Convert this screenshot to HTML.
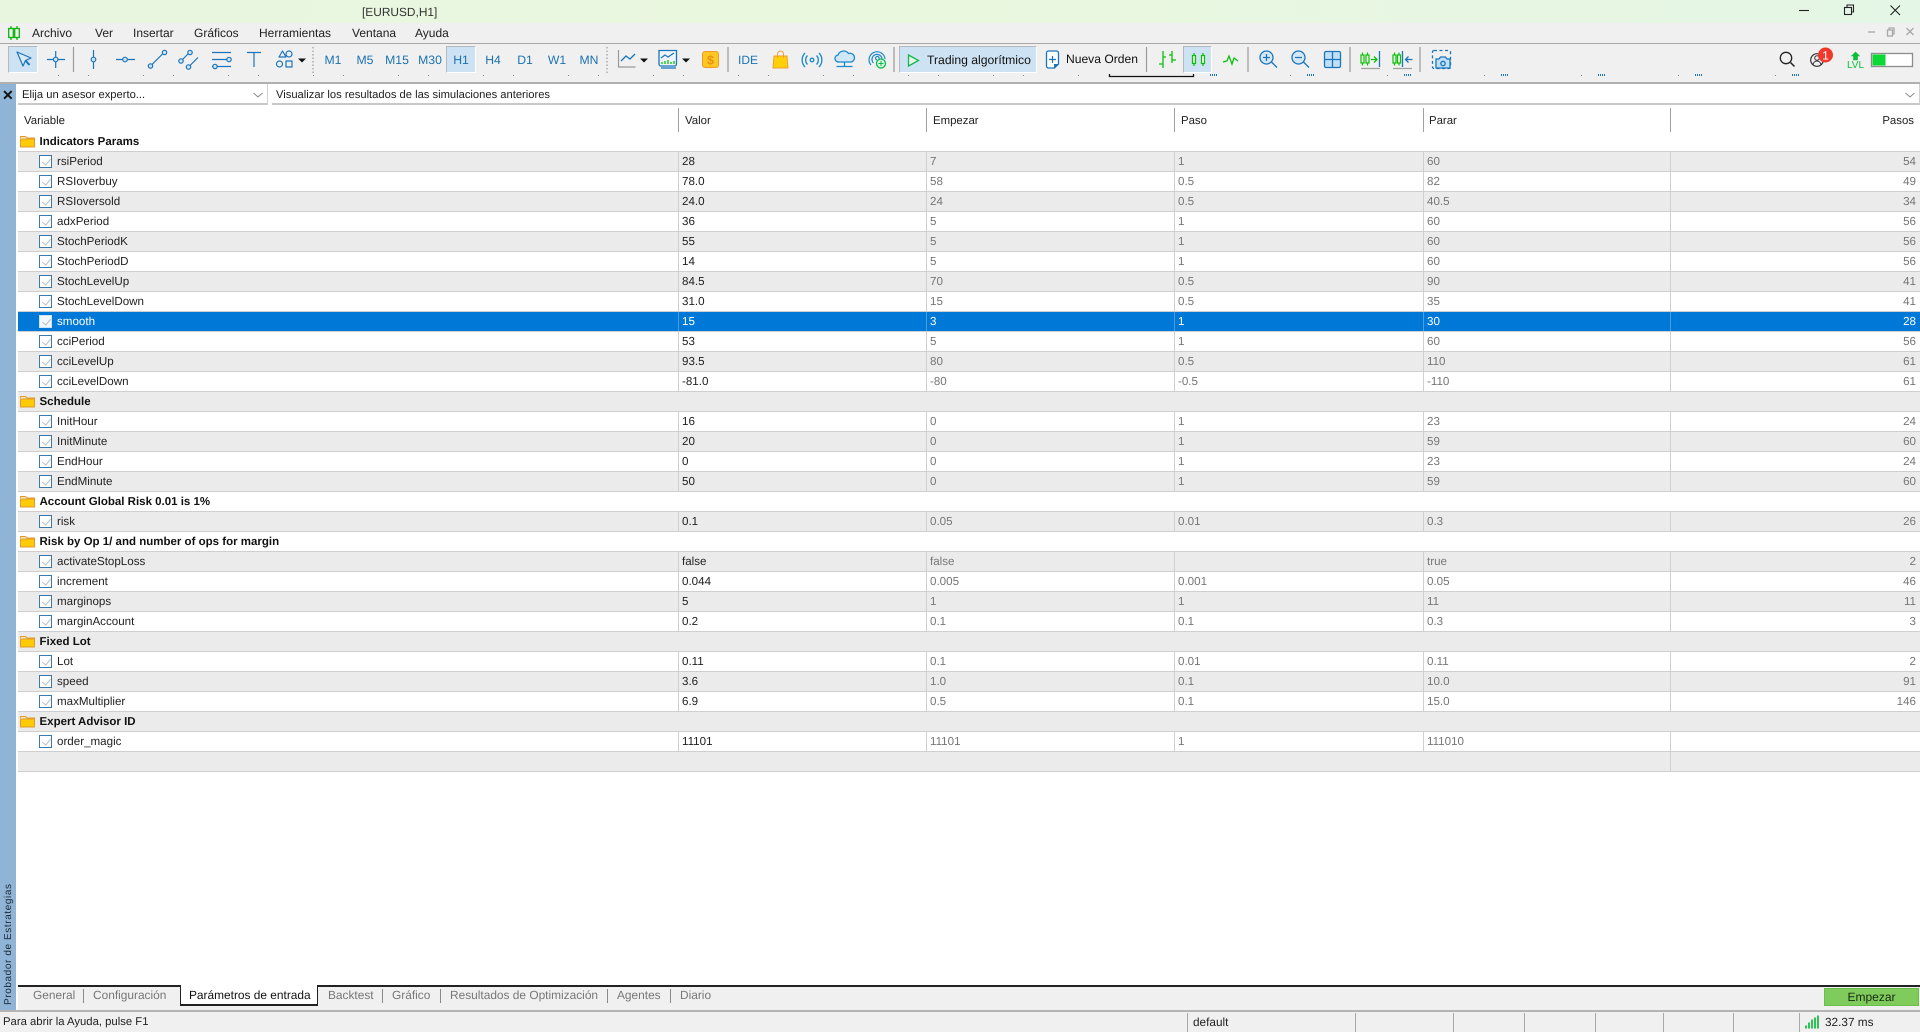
<!DOCTYPE html>
<html lang="es">
<head>
<meta charset="utf-8">
<title>[EURUSD,H1]</title>
<style>
*{box-sizing:border-box;margin:0;padding:0}
html,body{width:1920px;height:1032px;overflow:hidden;background:#fff}
body{position:relative;font-family:"Liberation Sans",sans-serif;font-size:11.6px;color:#1c1c1c;text-rendering:geometricPrecision;filter:blur(.3px)}
.a{position:absolute;white-space:nowrap}
#title{left:0;top:0;width:1920px;height:23px;background:linear-gradient(90deg,#e8f6e0,#eaf7df 50%,#e4f6e5)}
#menu{left:0;top:23px;width:1920px;height:20px;background:#f0f0f0}
#tb{left:0;top:43px;width:1920px;height:41px;background:#f0f0f0;border-top:1px solid #a8a8a8;border-bottom:2px solid #b0b0b0}
.m{font-size:12px;top:26px;color:#222}
.tf{font-size:12.2px;top:53px;color:#1b72b0;width:30px;text-align:center}
.sel{background:#cde2f2;border:1px solid #fff;border-top-color:#b4b9bd;border-left-color:#b4b9bd}
.cmb{background:#fff;border-bottom:2px solid #c8c8c8;border-right:1px solid #d0d0d0;height:21px;top:84px;line-height:22px;padding-left:4px;font-size:11.2px}
#strip{left:0;top:84px;width:16px;height:926px;background:#8fb4d6}
#x{left:2px;top:87px;font-size:14px;font-weight:bold;color:#111;line-height:16px}
#vt{left:1px;top:885px;width:15px;height:120px;writing-mode:vertical-rl;transform:rotate(180deg);font-size:10px;letter-spacing:.6px;line-height:15px;color:#1d2a36;text-align:left}
.h{top:114.500px;font-size:11.4px;color:#222}
.hs{top:108px;width:1px;height:24px;background:#a0a0a0}
.r{position:absolute;left:18px;width:1902px;height:20px;display:grid;grid-template-columns:660px 248px 248px 249px 247px 1fr;line-height:20px;border-bottom:1px solid #cfcfcf;white-space:nowrap}
.r>b{font-weight:normal;border-left:1px solid #cfcfcf;padding-left:3px;color:#777;overflow:hidden}
.r>b:nth-child(2){color:#222}
.r>b:first-child{border-left:0;padding-left:39px;color:#222}
.r>b:last-child{text-align:right;padding-right:4px}
.e{background:#ebebeb}
.g{display:block;font-weight:bold;padding-left:21.5px;color:#111;font-size:11.5px}
.s{background:#0078d7}
.s>b,.s>b:first-child,.s>b:nth-child(2){color:#fff;border-left-color:#4a9fe0}
.cb{position:absolute;left:21px;top:3px;width:13px;height:13px;border:1px solid #3a77ab;background:#fff}
.cb:after{content:"";position:absolute;left:3.5px;top:1px;width:4px;height:7px;border:solid #bcbcbc;border-width:0 1px 1px 0;transform:rotate(40deg)}
.s .cb{border-color:#cfe3f5;background:#f2f7fb}
.f{position:absolute;left:2px;top:2px}
#tabs{left:18px;top:985px;width:1902px;height:25px;background:#f0f0f0;border-top:2px solid #222}
#sb{left:0;top:1010px;width:1920px;height:22px;background:#f0f0f0;border-top:2px solid #b4b4b4}
.t{top:988px;color:#777;font-size:11.9px}
.ts{top:989px;width:1px;height:14px;background:#8a8a8a}
#at{left:180px;top:985px;width:138px;height:21px;background:#fff;border:2px solid #222;border-top:0;border-left-width:1.5px;border-right-width:1.5px}
.st{top:1015px;font-size:11.8px;color:#222}
.ss{top:1013px;width:1px;height:19px;background:#a8a8a8}
#go{left:1824px;top:988px;width:95px;height:18px;background:#7fcb5c;border:1px solid #6dbf4b;text-align:center;line-height:16px;font-size:12px;color:#1c2a12}
#ic{position:absolute;left:0;top:0}
</style>
</head>
<body>
<div class="a" id="title"></div>
<div class="a" id="menu"></div>
<div class="a" id="tb"></div>
<div class="a" style="left:362px;top:5px;font-size:11.9px;color:#333">[EURUSD,H1]</div>

<div class="a m" style="left:32px">Archivo</div>
<div class="a m" style="left:95px">Ver</div>
<div class="a m" style="left:133px">Insertar</div>
<div class="a m" style="left:194px">Gráficos</div>
<div class="a m" style="left:259px">Herramientas</div>
<div class="a m" style="left:352px">Ventana</div>
<div class="a m" style="left:415px">Ayuda</div>

<div class="a sel" style="left:8px;top:46px;width:30px;height:27px"></div>
<div class="a sel" style="left:446px;top:46px;width:30px;height:27px"></div>
<div class="a sel" style="left:899px;top:46px;width:138px;height:27px"></div>
<div class="a sel" style="left:1183px;top:46px;width:29px;height:27px"></div>

<div class="a tf" style="left:318px">M1</div>
<div class="a tf" style="left:350px">M5</div>
<div class="a tf" style="left:382px">M15</div>
<div class="a tf" style="left:415px">M30</div>
<div class="a tf" style="left:446px">H1</div>
<div class="a tf" style="left:478px">H4</div>
<div class="a tf" style="left:510px">D1</div>
<div class="a tf" style="left:542px">W1</div>
<div class="a tf" style="left:574px">MN</div>

<div class="a" style="left:927px;top:53px;font-size:12.2px;color:#111">Trading algorítmico</div>
<div class="a" style="left:1066px;top:52px;font-size:12.1px;color:#111">Nueva Orden</div>

<div class="a" id="strip"></div>
<div class="a" id="x">✕</div>
<div class="a" id="vt">Probador de Estrategias</div>

<div class="a cmb" style="left:18px;width:250px">Elija un asesor experto...</div>
<div class="a cmb" style="left:272px;width:1648px">Visualizar los resultados de las simulaciones anteriores</div>

<div class="a h" style="left:24px">Variable</div>
<div class="a h" style="left:685px">Valor</div>
<div class="a h" style="left:933px">Empezar</div>
<div class="a h" style="left:1181px">Paso</div>
<div class="a h" style="left:1429px">Parar</div>
<div class="a h" style="right:6px">Pasos</div>
<div class="a hs" style="left:678px"></div>
<div class="a hs" style="left:926px"></div>
<div class="a hs" style="left:1174px"></div>
<div class="a hs" style="left:1423px"></div>
<div class="a hs" style="left:1670px"></div>

<div class="r g" style="top:132px"><svg class="f" width="16" height="14"><use href="#fd"/></svg>Indicators Params</div>
<div class="r e" style="top:152px"><b><span class="cb"></span>rsiPeriod</b><b>28</b><b>7</b><b>1</b><b>60</b><b>54</b></div>
<div class="r" style="top:172px"><b><span class="cb"></span>RSIoverbuy</b><b>78.0</b><b>58</b><b>0.5</b><b>82</b><b>49</b></div>
<div class="r e" style="top:192px"><b><span class="cb"></span>RSIoversold</b><b>24.0</b><b>24</b><b>0.5</b><b>40.5</b><b>34</b></div>
<div class="r" style="top:212px"><b><span class="cb"></span>adxPeriod</b><b>36</b><b>5</b><b>1</b><b>60</b><b>56</b></div>
<div class="r e" style="top:232px"><b><span class="cb"></span>StochPeriodK</b><b>55</b><b>5</b><b>1</b><b>60</b><b>56</b></div>
<div class="r" style="top:252px"><b><span class="cb"></span>StochPeriodD</b><b>14</b><b>5</b><b>1</b><b>60</b><b>56</b></div>
<div class="r e" style="top:272px"><b><span class="cb"></span>StochLevelUp</b><b>84.5</b><b>70</b><b>0.5</b><b>90</b><b>41</b></div>
<div class="r" style="top:292px"><b><span class="cb"></span>StochLevelDown</b><b>31.0</b><b>15</b><b>0.5</b><b>35</b><b>41</b></div>
<div class="r s" style="top:312px"><b><span class="cb"></span>smooth</b><b>15</b><b>3</b><b>1</b><b>30</b><b>28</b></div>
<div class="r" style="top:332px"><b><span class="cb"></span>cciPeriod</b><b>53</b><b>5</b><b>1</b><b>60</b><b>56</b></div>
<div class="r e" style="top:352px"><b><span class="cb"></span>cciLevelUp</b><b>93.5</b><b>80</b><b>0.5</b><b>110</b><b>61</b></div>
<div class="r" style="top:372px"><b><span class="cb"></span>cciLevelDown</b><b>-81.0</b><b>-80</b><b>-0.5</b><b>-110</b><b>61</b></div>
<div class="r g e" style="top:392px"><svg class="f" width="16" height="14"><use href="#fd"/></svg>Schedule</div>
<div class="r" style="top:412px"><b><span class="cb"></span>InitHour</b><b>16</b><b>0</b><b>1</b><b>23</b><b>24</b></div>
<div class="r e" style="top:432px"><b><span class="cb"></span>InitMinute</b><b>20</b><b>0</b><b>1</b><b>59</b><b>60</b></div>
<div class="r" style="top:452px"><b><span class="cb"></span>EndHour</b><b>0</b><b>0</b><b>1</b><b>23</b><b>24</b></div>
<div class="r e" style="top:472px"><b><span class="cb"></span>EndMinute</b><b>50</b><b>0</b><b>1</b><b>59</b><b>60</b></div>
<div class="r g" style="top:492px"><svg class="f" width="16" height="14"><use href="#fd"/></svg>Account Global Risk 0.01 is 1%</div>
<div class="r e" style="top:512px"><b><span class="cb"></span>risk</b><b>0.1</b><b>0.05</b><b>0.01</b><b>0.3</b><b>26</b></div>
<div class="r g" style="top:532px"><svg class="f" width="16" height="14"><use href="#fd"/></svg>Risk by Op 1/ and number of ops for margin</div>
<div class="r e" style="top:552px"><b><span class="cb"></span>activateStopLoss</b><b>false</b><b>false</b><b></b><b>true</b><b>2</b></div>
<div class="r" style="top:572px"><b><span class="cb"></span>increment</b><b>0.044</b><b>0.005</b><b>0.001</b><b>0.05</b><b>46</b></div>
<div class="r e" style="top:592px"><b><span class="cb"></span>marginops</b><b>5</b><b>1</b><b>1</b><b>11</b><b>11</b></div>
<div class="r" style="top:612px"><b><span class="cb"></span>marginAccount</b><b>0.2</b><b>0.1</b><b>0.1</b><b>0.3</b><b>3</b></div>
<div class="r g e" style="top:632px"><svg class="f" width="16" height="14"><use href="#fd"/></svg>Fixed Lot</div>
<div class="r" style="top:652px"><b><span class="cb"></span>Lot</b><b>0.11</b><b>0.1</b><b>0.01</b><b>0.11</b><b>2</b></div>
<div class="r e" style="top:672px"><b><span class="cb"></span>speed</b><b>3.6</b><b>1.0</b><b>0.1</b><b>10.0</b><b>91</b></div>
<div class="r" style="top:692px"><b><span class="cb"></span>maxMultiplier</b><b>6.9</b><b>0.5</b><b>0.1</b><b>15.0</b><b>146</b></div>
<div class="r g e" style="top:712px"><svg class="f" width="16" height="14"><use href="#fd"/></svg>Expert Advisor ID</div>
<div class="r" style="top:732px"><b><span class="cb"></span>order_magic</b><b>11101</b><b>11101</b><b>1</b><b>111010</b><b></b></div>
<div class="r e" style="top:752px;grid-template-columns:1652px 1fr"><b></b><b></b></div>

<div class="a" id="tabs"></div>
<div class="a" id="at"></div>
<div class="a t" style="left:33px">General</div>
<div class="a ts" style="left:83px"></div>
<div class="a t" style="left:93px">Configuración</div>
<div class="a t" style="left:189px;color:#111">Parámetros de entrada</div>
<div class="a t" style="left:328px">Backtest</div>
<div class="a ts" style="left:382px"></div>
<div class="a t" style="left:392px">Gráfico</div>
<div class="a ts" style="left:440px"></div>
<div class="a t" style="left:450px">Resultados de Optimización</div>
<div class="a ts" style="left:607px"></div>
<div class="a t" style="left:617px">Agentes</div>
<div class="a ts" style="left:670px"></div>
<div class="a t" style="left:680px">Diario</div>
<div class="a" id="go">Empezar</div>

<div class="a" id="sb"></div>
<div class="a st" style="left:3px;top:1016px;font-size:11.3px">Para abrir la Ayuda, pulse F1</div>
<div class="a ss" style="left:1187px"></div>
<div class="a st" style="left:1193px">default</div>
<div class="a ss" style="left:1355px"></div>
<div class="a ss" style="left:1453px"></div>
<div class="a ss" style="left:1524px"></div>
<div class="a ss" style="left:1595px"></div>
<div class="a ss" style="left:1663px"></div>
<div class="a ss" style="left:1733px"></div>
<div class="a ss" style="left:1799px"></div>
<div class="a st" style="left:1825px">32.37 ms</div>

<svg id="ic" width="1920" height="1032" viewBox="0 0 1920 1032" fill="none">
<defs>
<g id="fd"><path d="M.5 4V2.500h5l1.500 1.500h7.500V5" stroke="#e39a2c" fill="#fbe6b8"/><path d="M.5 5h14v8H.5z" fill="#ffcb05" stroke="#e39a2c"/></g>
<g id="cdl" stroke="#0abf0a" stroke-width="1.400"><path d="M0-8v16"/><rect x="-2.500" y="-5.500" width="5" height="11" fill="#f0f8e8"/></g>
<g id="cds" stroke="#0abf0a" stroke-width="1.200"><path d="M0-6.500v13"/><rect x="-1.500" y="-4" width="3" height="8" fill="#f0f8e8"/></g>
</defs>

<!-- window buttons -->
<g stroke="#222" stroke-width="1.100">
<path d="M1799 10.500h10"/><rect x="1844.500" y="7.500" width="7" height="7"/><path d="M1847 7V5h6.500v7h-2"/><path d="M1890.500 5.500l9.500 9.500M1900 5.500l-9.500 9.500"/>
</g>
<g stroke="#a8a8a8" stroke-width="1.300"><path d="M1868 32h7"/><rect x="1887.500" y="30" width="5" height="6"/><path d="M1889 30v-2h5v6h-1.500"/><path d="M1906.500 28l7 7M1913.500 28l-7 7"/></g>

<!-- logo -->
<g stroke="#0bb50b" stroke-width="1.300"><path d="M11 26v14M17 26v14"/><rect x="8.700" y="28.500" width="4.600" height="9" fill="#f0f0f0"/><rect x="14.700" y="28.500" width="4.600" height="9" fill="#f0f0f0"/></g>

<!-- drawing tools -->
<g stroke="#1b75bb" stroke-width="1.200" stroke-linejoin="round">
<path d="M17 52l14 6-5.500 2.500L23 66z" fill="#dbe9f4"/><path d="M25.500 60.500l4 4.500" stroke-width="2"/>
<path d="M47 59.500h18M55.700 51v17"/><circle cx="55.700" cy="59.500" r="2.300" fill="#cfe3f2"/>
<path d="M93.500 50v19"/><circle cx="93.500" cy="59.500" r="2.300" fill="#cfe3f2"/>
<path d="M116 59.500h19"/><circle cx="125" cy="59.500" r="2.300" fill="#cfe3f2"/>
<path d="M152 64.500l11-11"/><circle cx="150.500" cy="66" r="2.200" fill="#cfe3f2"/><circle cx="164.500" cy="52.500" r="2.200" fill="#cfe3f2"/>
<path d="M182.500 59.500l6-6M190 65.500l8-8"/><circle cx="181" cy="61" r="2.200" fill="#cfe3f2"/><circle cx="190" cy="52.500" r="2.200" fill="#cfe3f2"/><circle cx="188.500" cy="67" r="2.200" fill="#cfe3f2"/>
<path d="M212 52.500h19M212 59.500h19M212 66.500h19"/><circle cx="229" cy="59.500" r="2.200" fill="#cfe3f2"/><circle cx="215" cy="66.500" r="2.200" fill="#cfe3f2"/>
<path d="M247 52.500h14M254 52.500V67"/>
<path d="M279 57l3.500-6 3.500 6z"/><circle cx="289" cy="54" r="3"/><circle cx="279.500" cy="64" r="3"/><rect x="286" y="61" width="6" height="6"/>
</g>
<path d="M298 58.500h8l-4 4z" fill="#111"/>
<path d="M73.500 47v25M728 47v25M894 47v25M1146.500 47v25M1248 47v25M1350 47v25M1420 47v25" stroke="#9a9a9a" stroke-width="1.200"/>
<path d="M313 47v26M607 47v26" stroke="#bcbcbc" stroke-width="2" stroke-dasharray="1.500 2"/>

<!-- chart tools -->
<path d="M618.500 50v17h17" stroke="#999" stroke-width="1.200"/>
<path d="M621 61l5-5 4 3 5-5" stroke="#1b75bb" stroke-width="1.300"/>
<path d="M640 58.500h8l-4 4z" fill="#111"/>
<path d="M659 50.500h17.500v13.500a2 2 0 0 1-2 2H661a2 2 0 0 1-2-2z" stroke="#1b75bb" stroke-width="1.300" fill="#eef5fa"/><path d="M661 68h15" stroke="#1b75bb" stroke-width="1.300"/>
<path d="M661 58l4-3 3 2 6-4" stroke="#1b75bb" stroke-width="1.200"/><path d="M662 64v-2M665 64v-3M668 64v-4M671 64v-2M674 64v-3" stroke="#0abf0a" stroke-width="1.300"/>
<path d="M682 58.500h8l-4 4z" fill="#111"/>
<rect x="702.500" y="51.500" width="16" height="16" rx="2.500" fill="#ffc81e" stroke="#f09a2a"/>
<text x="710.500" y="64.500" font-family="Liberation Sans" font-weight="bold" font-size="13" fill="#e6921c" text-anchor="middle">$</text>
<text x="748" y="64" font-family="Liberation Sans" font-size="12" fill="#1b75bb" text-anchor="middle">IDE</text>
<path d="M774 56h13l1 12h-15z" fill="#ffcf0a" stroke="#eda02d"/><path d="M777.500 58v-4a3 3 0 0 1 6 0v4" stroke="#eda02d"/>
<g stroke="#1b88cc" stroke-width="1.300"><circle cx="812" cy="60" r="1.800"/><path d="M807.500 55.500a6.500 6.500 0 0 0 0 9M816.500 55.500a6.500 6.500 0 0 1 0 9M805 53a10 10 0 0 0 0 14M819 53a10 10 0 0 1 0 14"/></g>
<g stroke="#1b88cc" stroke-width="1.300"><path d="M839 62a3.500 3.500 0 0 1-1-7 6 6 0 0 1 10.500-1.500 4.500 4.500 0 0 1 3 8.500z" fill="#cfe7f6"/><path d="M844.500 62v4M836.500 66.500h16"/></g>
<g stroke="#1b88cc" stroke-width="1.200"><path d="M871 65a8 8 0 1 1 14-6"/><path d="M873.500 63a5 5 0 1 1 8.500-3.500"/><path d="M877 60a1.800 1.800 0 1 1 2-1"/></g>
<circle cx="881" cy="63.500" r="4.500" fill="#dff6e2" stroke="#09b94a" stroke-width="1.300"/><path d="M878.500 63.500h5M881 61v5" stroke="#09b94a"/>
<path d="M908.500 55l10 5.500-10 5.500z" stroke="#14b84d" stroke-width="1.300" fill="#e4f4e8"/>
<path d="M1046.500 53a2 2 0 0 1 2-2h8a2 2 0 0 1 2 2v11l-4 4h-6a2 2 0 0 1-2-2z" stroke="#1b75bb" stroke-width="1.300" fill="#fff"/><path d="M1049 59.500h7M1052.500 56v7" stroke="#1b75bb" stroke-width="1.200"/><path d="M1058 64l-4 4v-4z" fill="#1b75bb"/>
<path d="M1109.500 74v2.500h84V74" stroke="#111" stroke-width="1.300"/>

<!-- bars / candles / line -->
<g stroke="#0abf0a" stroke-width="1.300">
<path d="M1163 51v17M1159 64h4M1163 57h3M1172 51v12M1172 55h-3M1172 60h4"/>
</g>
<use href="#cds" x="1194" y="59.500"/><use href="#cds" x="1203" y="59.500"/>
<path d="M1223 62l4-1 2-5 3 8 2-6 4 3" stroke="#0abf0a" stroke-width="1.300"/>

<!-- zoom / grid -->
<g stroke="#1b75bb" stroke-width="1.300">
<circle cx="1266.500" cy="57.500" r="6.500" fill="#d6e8f5"/><path d="M1271.500 62l5.500 5.500M1263 57.500h7M1266.500 54v7"/>
<circle cx="1298.500" cy="57.500" r="6.500" fill="#d6e8f5"/><path d="M1303.500 62l5.500 5.500M1295 57.500h7"/>
<rect x="1324.500" y="51.500" width="16" height="16" rx="1.500" fill="#bfe0f7"/><path d="M1332.500 51.500v16M1324.500 59.500h16"/>
</g>
<use href="#cds" x="1362.500" y="59"/><use href="#cds" x="1367.500" y="59"/><path d="M1371 59.500h6M1374 56.500l3 3-3 3" stroke="#0abf0a" stroke-width="1.300"/>
<path d="M1379.500 51v16" stroke="#1b75bb" stroke-width="1.300"/><path d="M1361 68.500h19M1393 68.500h19" stroke="#a0a0a0" stroke-width="1.200"/>
<use href="#cds" x="1394.500" y="59"/><use href="#cds" x="1399" y="59"/><path d="M1402.500 51v16" stroke="#1b75bb" stroke-width="1.300"/>
<path d="M1405.500 59.500h7M1408.500 56.500l-3 3 3 3" stroke="#1b75bb" stroke-width="1.300"/>
<rect x="1432.500" y="50.500" width="18" height="18" rx="1.500" stroke="#1b75bb" stroke-width="1.300" stroke-dasharray="3 2.500"/>
<path d="M1436 59h3l1.500-2h5l1.500 2h3v9h-14z" fill="#bfe0f7" stroke="#1b75bb" stroke-width="1.300"/><circle cx="1443" cy="63.500" r="2.200" stroke="#1b75bb" stroke-width="1.300"/>

<!-- right side -->
<circle cx="1786" cy="58" r="5.700" stroke="#222" stroke-width="1.300"/><path d="M1790.500 62.500l4 4" stroke="#222" stroke-width="1.500"/>
<circle cx="1817" cy="60" r="6.300" stroke="#333" stroke-width="1.200"/><circle cx="1817" cy="58" r="2.300" stroke="#333"/><path d="M1813 65a4 4 0 0 1 8 0" stroke="#333"/>
<circle cx="1825.500" cy="55" r="7.500" fill="#f0382b"/>
<text x="1825.500" y="59.500" font-family="Liberation Sans" font-size="12" fill="#fff" text-anchor="middle">1</text>
<path d="M1855.500 52l4 4h-2v4h-4v-4h-2z" fill="#0abf3c" stroke="#0abf3c" stroke-width=".6"/>
<text x="1855.500" y="68" font-family="Liberation Sans" font-size="10" fill="#0abf3c" text-anchor="middle">LVL</text>
<rect x="1871.500" y="53.500" width="41" height="13" fill="#fff" stroke="#8c8c8c" stroke-width="1.300"/><rect x="1872.500" y="54.500" width="13" height="11" fill="#0bd834"/>
<path d="M1806 1028.500v-3M1809 1028.500v-6M1812 1028.500v-9M1815 1028.500v-11M1818 1028.500v-13" stroke="#10b83c" stroke-width="1.700"/>

<!-- combo chevrons -->
<path d="M253.500 93l4.500 4 4.500-4M1905.500 93l4.500 4 4.500-4" stroke="#888" stroke-width="1"/>

<!-- toolbar dots -->
<g fill="#7a8a9a"><rect x="58" y="75" width="1" height="1"/><rect x="88" y="75" width="1" height="1"/><rect x="143" y="75" width="1" height="1"/><rect x="173" y="75" width="1" height="1"/><rect x="228" y="75" width="1" height="1"/><rect x="258" y="75" width="1" height="1"/><rect x="313" y="75" width="1" height="1"/><rect x="343" y="75" width="1" height="1"/><rect x="398" y="75" width="1" height="1"/><rect x="428" y="75" width="1" height="1"/><rect x="483" y="75" width="1" height="1"/><rect x="513" y="75" width="1" height="1"/><rect x="568" y="75" width="1" height="1"/><rect x="598" y="75" width="1" height="1"/><rect x="653" y="75" width="1" height="1"/><rect x="683" y="75" width="1" height="1"/><rect x="738" y="75" width="1" height="1"/><rect x="768" y="75" width="1" height="1"/><rect x="823" y="75" width="1" height="1"/><rect x="853" y="75" width="1" height="1"/><rect x="908" y="75" width="1" height="1"/><rect x="938" y="75" width="1" height="1"/><rect x="993" y="75" width="1" height="1"/><rect x="1023" y="75" width="1" height="1"/><rect x="1078" y="75" width="1" height="1"/><rect x="1290" y="75" width="1" height="1"/><rect x="1387" y="75" width="1" height="1"/><rect x="1484" y="75" width="1" height="1"/><rect x="1581" y="75" width="1" height="1"/><rect x="1678" y="75" width="1" height="1"/><rect x="1775" y="75" width="1" height="1"/></g>
<path d="M1210 75h7M1307 75h7M1404 75h7M1501 75h7M1598 75h7M1695 75h7M1792 75h7" stroke="#1b75bb" stroke-width="2" stroke-dasharray="1 1"/>
</svg>
</body>
</html>
